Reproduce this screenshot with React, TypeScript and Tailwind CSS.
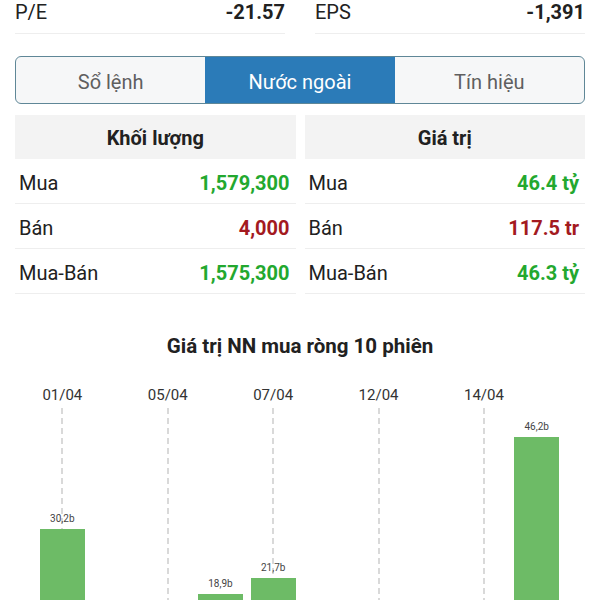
import React from 'react';

type Row = { label: string; value: string; tone: 'up' | 'down' };

const volumeRows: Row[] = [
  { label: 'Mua', value: '1,579,300', tone: 'up' },
  { label: 'Bán', value: '4,000', tone: 'down' },
  { label: 'Mua-Bán', value: '1,575,300', tone: 'up' },
];

const valueRows: Row[] = [
  { label: 'Mua', value: '46.4 tỷ', tone: 'up' },
  { label: 'Bán', value: '117.5 tr', tone: 'down' },
  { label: 'Mua-Bán', value: '46.3 tỷ', tone: 'up' },
];

// 10 sessions, date shown on every other column
const sessions: { date?: string; value?: number; label?: string }[] = [
  { date: '01/04', value: 30.2, label: '30,2b' },
  {},
  { date: '05/04' },
  { value: 18.9, label: '18,9b' },
  { date: '07/04', value: 21.7, label: '21,7b' },
  {},
  { date: '12/04' },
  {},
  { date: '14/04' },
  { value: 46.2, label: '46,2b' },
];

const PX_PER_B = 5.75;

function StatTable({ title, rows }: { title: string; rows: Row[] }) {
  return (
    <div className="flex flex-col">
      <div className="flex h-[44px] items-center justify-center bg-[#f3f3f3] pt-[2px] text-[20px] font-bold text-[#212121]">
        {title}
      </div>
      {rows.map((r) => (
        <div
          key={r.label}
          className="flex h-[45px] items-center justify-between border-b border-[#eeeeee] pl-[4px] pr-[6px] pt-[4px]"
        >
          <span className="text-[20px] text-[#212121]">{r.label}</span>
          <span
            className={
              r.tone === 'up'
                ? 'text-[20px] font-bold text-[#23a82f]'
                : 'text-[20px] font-bold text-[#a31a1f]'
            }
          >
            {r.value}
          </span>
        </div>
      ))}
    </div>
  );
}

export default function App() {
  const tabs = ['Sổ lệnh', 'Nước ngoài', 'Tín hiệu'];
  const active = 1;

  return (
    <div className="min-h-screen bg-white font-['Roboto',sans-serif] text-[#212121]">
      {/* P/E, EPS */}
      <div className="grid grid-cols-2 gap-[30px] px-[15px]">
        <div className="flex h-[34px] items-start justify-between border-b border-[#eeeeee] leading-[24px]">
          <span className="text-[20px]">P/E</span>
          <span className="text-[20px] font-bold">-21.57</span>
        </div>
        <div className="flex h-[34px] items-start justify-between border-b border-[#eeeeee] leading-[24px]">
          <span className="text-[20px]">EPS</span>
          <span className="text-[20px] font-bold">-1,391</span>
        </div>
      </div>

      {/* Tabs */}
      <div className="mx-[15px] mt-[22px] grid h-[48px] grid-cols-3 overflow-hidden rounded-[6px] border border-[#5f8797] bg-[#f6f7f8]">
        {tabs.map((t, i) => (
          <div
            key={t}
            className={
              i === active
                ? 'flex items-center justify-center bg-[#2b7bb8] pt-[3px] text-[20px] text-white'
                : 'flex items-center justify-center pt-[3px] text-[20px] text-[#5f5f5f]'
            }
          >
            {t}
          </div>
        ))}
      </div>

      {/* Foreign trading tables */}
      <div className="mt-[11px] grid grid-cols-2 gap-[9px] px-[15px]">
        <StatTable title="Khối lượng" rows={volumeRows} />
        <StatTable title="Giá trị" rows={valueRows} />
      </div>

      {/* Chart */}
      <h2 className="mt-[40px] text-center text-[20.5px] font-bold leading-[24px] text-[#212121]">
        Giá trị NN mua ròng 10 phiên
      </h2>

      <div className="mt-[27px] grid grid-cols-10 pl-[36px] pr-[37px]">
        {sessions.map((s, i) => (
          <div key={i} className="flex flex-col items-center">
            <div className="h-[20px] whitespace-nowrap text-[15px] leading-[20px] text-[#333333]">
              {s.date ?? ''}
            </div>
            <div className="relative mt-[3px] flex h-[295px] w-full flex-col items-center justify-end">
              {s.date && (
                <svg className="absolute left-1/2 top-0 -ml-px h-full w-[2px]" viewBox="0 0 2 295" preserveAspectRatio="none">
                  <line x1="1" y1="0" x2="1" y2="295" stroke="#b3b3b3" strokeWidth="1" strokeDasharray="6 4" />
                </svg>
              )}
              {s.value !== undefined && (
                <>
                  <span className="relative mb-[3px] text-[10px] leading-[14px] text-[#444444]">{s.label}</span>
                  <div
                    className="relative w-[45px] bg-[#6dbb66]"
                    style={{ height: `${s.value * PX_PER_B}px` }}
                  />
                </>
              )}
            </div>
          </div>
        ))}
      </div>
    </div>
  );
}
